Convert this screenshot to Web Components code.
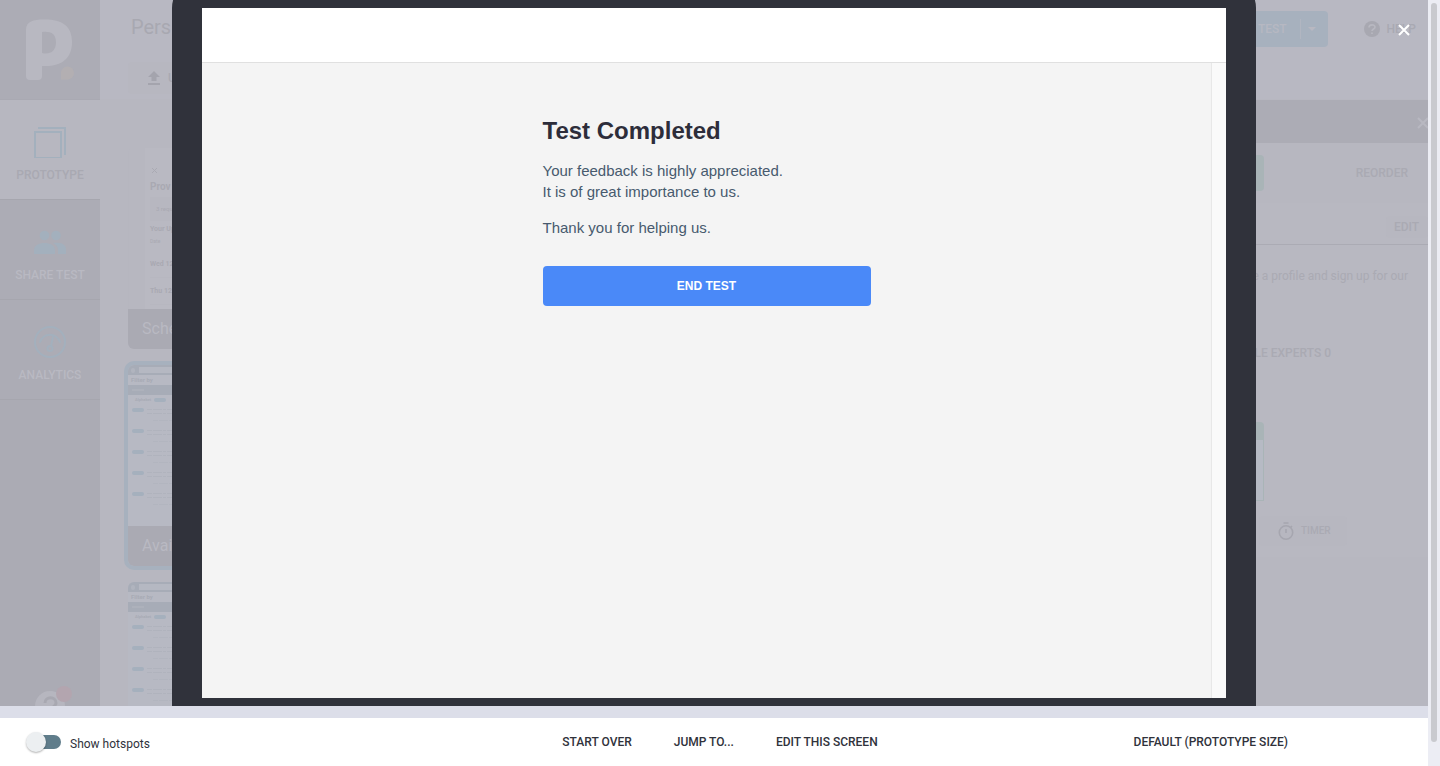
<!DOCTYPE html>
<html lang="en">
<head>
<meta charset="utf-8">
<title>Prototype preview</title>
<style>
  html, body { margin: 0; height: 100%; }
  body { font-family: Roboto, "Liberation Sans", sans-serif; font-size: 12px; color: #a5a5ae; overflow: hidden; }
</style>
</head>
<body>
<preview-app></preview-app>

<script>
const define = (name, html, setup) => {
  const template = document.createElement('template');
  template.innerHTML = html;
  customElements.define(name, class extends HTMLElement {
    constructor() {
      super();
      this.attachShadow({ mode: 'open' }).append(template.content.cloneNode(true));
    }
    connectedCallback() { if (setup) setup(this, this.shadowRoot); }
  });
};

/* Sidebar */
define('nav-tile', `
  <style>
    :host { display: block; height: 100px; box-sizing: border-box; background: #acacb5; border-bottom: 1px solid #a6a6ae; color: #b9b9c2; }
    :host([current]) { background: #b7b7c0; color: #a9a9b2; }
    a { display: flex; flex-direction: column; align-items: center; gap: 9px; padding-top: 26px; color: inherit; text-decoration: none; font-size: 12px; line-height: 16px; font-weight: 500; }
    ::slotted(svg) { display: block; width: 32px; height: 32px; }
  </style>
  <a href="#"><slot name="icon"></slot><slot></slot></a>`);

define('side-nav', `
  <style>
    :host { display: flex; flex-direction: column; width: 100px; flex: none; background: #ababb4; overflow: hidden; }
    .logo { height: 99px; flex: none; background: #acacb5; border-bottom: 1px solid #a9a9b2; }
    .logo svg { display: block; }
    nav-tile { flex: none; }
    .help { margin: auto auto -16px; padding: 0; border: 0; background: none; width: 44px; height: 36px; flex: none; }
  </style>
  <a class="logo" href="#" aria-label="Home">
    <svg width="100" height="99" viewBox="0 0 100 99">
      <path fill="#b8b8c1" fill-rule="evenodd" d="M26 30C26 21 34 19.500 43 19.500C61 19 72 25 72 42C72 59 61 67 42 66V76Q42 80 38 80H30Q26 80 26 76ZM42 32V53C50 55 56 51 56 42.500C56 33 50 31 42 32Z"/>
      <path fill="#b3afb2" d="M61 79V73A6.500 6.500 0 1 1 68 79.500H61Z"/>
    </svg>
  </a>
  <nav-tile current>
    <svg slot="icon" viewBox="0 0 32 32" fill="none" stroke="#a3b0bd" stroke-width="2"><path d="M1 6H27V32H1ZM4 2H31V29"/></svg>PROTOTYPE
  </nav-tile>
  <nav-tile>
    <svg slot="icon" viewBox="0 0 32 32" fill="#a3b0bd"><circle cx="10.500" cy="9.500" r="4.800"/><circle cx="22" cy="9.500" r="4.800"/><path d="M0 28V24C0 14.500 21 14.500 21 24V28ZM19 17C29 15.500 32 20 32 23V28H24V24C24 21 22 18.500 19 17Z"/></svg>SHARE TEST
  </nav-tile>
  <nav-tile>
    <svg slot="icon" viewBox="0 0 32 32" fill="none" stroke="#a3b0bd" stroke-width="2" stroke-linecap="round"><circle cx="16" cy="16" r="15"/><path d="M6 16A10.500 10.500 0 0 1 26 16M19 10.500L17 20"/><circle cx="16" cy="22.500" r="2.500"/></svg>ANALYTICS
  </nav-tile>
  <button class="help" aria-label="Help">
    <svg width="44" height="36" viewBox="0 0 44 36"><circle cx="22" cy="20" r="15" fill="#b6b6bf"/><path d="M17 17C17 10 28 10 28 17C28 21 22 21 22 26" fill="none" stroke="#a8a8b1" stroke-width="3"/><circle cx="36" cy="8" r="8" fill="#b3a5af"/></svg>
  </button>`);

/* Top bar of the workspace */
define('project-header', `
  <style>
    :host { display: flex; justify-content: space-between; height: 100px; box-sizing: border-box; background: #b8b8c2; border-bottom: 1px solid #b7b7c0; }
    h1 { margin: 0; padding: 14px 0 0 31px; font-size: 20px; line-height: 26px; font-weight: 400; color: #a8a8b1; }
    .upload { display: flex; align-items: center; gap: 8px; margin: 22px 0 0 28px; padding: 0 20px; height: 32px; border: 0; background: #b7b7c0; border-radius: 4px; font: 500 12px/16px Roboto, sans-serif; color: #a9a9b2; }
    .right { display: flex; align-items: flex-start; padding: 11px 12px 0 0; }
    .test { display: flex; align-items: center; width: 100px; height: 36px; padding: 0 12px 0 0; box-sizing: border-box; border: 0; border-radius: 4px; background: #a7b1be; color: #b6b8c2; font: 500 12px/16px Roboto, sans-serif; justify-content: flex-end; }
    .test i { width: 1px; height: 20px; background: #b1b6c1; margin: 0 7px 0 13px; }
    .help { display: flex; align-items: center; gap: 7px; height: 36px; margin-left: 36px; color: #a9a9b2; text-decoration: none; font: 500 12px/16px Roboto, sans-serif; }
  </style>
  <div>
    <h1>Pers</h1>
    <button class="upload"><svg width="12" height="14" viewBox="0 0 12 14" fill="#a4a4ad"><path d="M6 0L12 6H8.500V10H3.500V6H0ZM0 12H12V14H0Z"/></svg>U</button>
  </div>
  <div class="right">
    <button class="test">TEST<i></i><svg width="8" height="5" viewBox="0 0 8 5" fill="#b8b8c1"><path d="M0 0H8L4 4Z"/></svg></button>
    <a class="help" href="#"><svg width="16" height="16" viewBox="0 0 16 16"><circle cx="8" cy="8" r="8" fill="#a8a8b1"/><path d="M5 6.500C5 3 11 3 11 6.200C11 8 8 8 8 10M8 11.500V13" fill="none" stroke="#b8b8c1" stroke-width="1.600"/></svg>HELP</a>
  </div>`);

/* Screen thumbnails */
define('schedule-thumb', `
  <style>
    :host { display: block; height: 161px; box-sizing: border-box; padding: 17px 0 0 21px; background: #b9b9c2; color: #a9a9b2; font-weight: 700; border-left: 1px solid #b6b6bf; box-shadow: inset 16px 0 #b7b7c0; }
    svg { display: block; margin: 3px 2px 4px; }
    p { margin: 0; white-space: nowrap; font-size: 7px; line-height: 16px; }
    .title { font-size: 10px; line-height: 20px; }
    .note { font-size: 6px; line-height: 24px; padding-left: 6px; font-weight: 400; background: #b7b7c0; }
    .small { font-size: 5px; line-height: 8px; font-weight: 400; }
    .day { line-height: 26px; border-bottom: 1px solid #b7b7c0; }
    .first { margin-top: 6px; }
  </style>
  <svg width="5" height="5" viewBox="0 0 5 5" stroke="#aaaab3"><path d="M0 0L5 5M5 0L0 5"/></svg>
  <p class="title">Prov</p>
  <p class="note">3 requ</p>
  <p>Your Up</p>
  <p class="small">Date</p>
  <p class="day first">Wed 12.</p>
  <p class="day">Thu 12.</p>`);

define('list-thumb', `
  <style>
    :host { display: block; height: 161px; background: #b7b9c3; overflow: hidden; color: #a8abb5; font-size: 6px; line-height: 10px; font-weight: 700; }
    .top { height: 10px; background: #a7acb7; display: flex; align-items: center; gap: 4px; padding-left: 3px; }
    .top b { width: 4px; height: 5px; background: #b0b4be; border-radius: 2px; }
    .top span { flex: 1; height: 6px; background: #b5b8c2; }
    .filter { padding-left: 3px; }
    .band { display: flex; align-items: center; height: 10px; padding-left: 4px; background: #a7acb7; }
    .band b { width: 12px; height: 2px; background: #adb1bb; }
    .group { display: flex; align-items: center; gap: 3px; padding-left: 7px; font-size: 4px; }
    i { flex: none; width: 12px; height: 4px; border-radius: 2px; background: #a5b0bd; }
    .row { display: flex; gap: 3px; height: 21px; padding: 3px 0 0 4px; box-sizing: border-box; }
    svg { display: block; }
  </style>
  <div class="top"><b></b><span></span></div>
  <div class="filter">Filter by</div>
  <div class="band"><b></b></div>
  <div class="group">Alphabet<i></i></div>
  <div id="rows"></div>`, (host, root) => {
  const row = `<div class="row"><i></i><svg width="60" height="16" viewBox="0 0 60 16" stroke="#b0b3bd" stroke-dasharray="5 1 9 1 3 1"><path d="M0 1.500H60M0 5.500H42"/><path stroke="#b2b5bf" d="M6 12.500H30"/></svg></div>`;
  root.getElementById('rows').innerHTML = row.repeat(5);
});

define('screen-card', `
  <style>
    :host { display: block; width: 180px; border-radius: 6px; overflow: hidden; flex: none; }
    :host([selected]) { outline: 4px solid #a7b1be; }
    p { margin: 0; padding: 0 14px; background: #aaaab3; color: #b9b9c2; font-size: 16px; line-height: 40px; }
  </style>
  <slot name="thumb"></slot><p><slot></slot></p>`);

/* Right-hand settings panel */
define('test-panel', `
  <style>
    :host { display: flex; flex-direction: column; width: 200px; flex: none; overflow: hidden; background: #b8b8c1; }
    button { border: 0; background: none; padding: 0; color: #aaaab3; font: 500 12px/16px Roboto, sans-serif; }
    header { display: flex; justify-content: flex-end; height: 43px; box-sizing: border-box; padding-top: 17px; background: #acacb5; flex: none; }
    header button { margin-right: -1px; height: 12px; }
    svg { display: block; }
    .actions { display: flex; justify-content: space-between; align-items: center; height: 60px; padding-right: 20px; background: #b7b7c0; }
    .go { width: 36px; height: 36px; border-radius: 4px; background: #a9b4b7; }
    .edit { display: flex; justify-content: flex-end; height: 42px; box-sizing: border-box; padding: 13px 0 6px; border-bottom: 1px solid #ababb4; }
    .edit button { width: 42px; background: #b7b7c0; border-radius: 4px; text-align: left; padding-left: 8px; }
    p { margin: 0; padding: 23px 20px 0 0; text-align: right; line-height: 16px; font-size: 12px; color: #aaaab3; white-space: nowrap; }
    h2 { margin: 0; padding: 61px 97px 0 0; text-align: right; font-size: 12px; line-height: 16px; font-weight: 500; color: #aaaab3; white-space: nowrap; }
    .choice { width: 36px; height: 79px; box-sizing: border-box; margin-top: 61px; border: 1px solid #a9b4b7; border-top: 18px solid #a9b4b7; border-radius: 0 4px 0 0; background: #b6bac4; }
    .timer { display: flex; align-items: center; gap: 7px; margin: 15px 0 11px 31px; width: 88px; height: 30px; box-sizing: border-box; padding-left: 19px; background: #b7b7c0; border-radius: 4px; font-size: 10px; }
    .rest { flex: 1; background: #b7b7c0; }
  </style>
  <header><button aria-label="Close panel"><svg width="12" height="12" viewBox="0 0 12 12" stroke="#b8b8c1" stroke-width="2"><path d="M1 1L11 11M11 1L1 11"/></svg></button></header>
  <div class="actions"><button class="go" aria-label="Add"></button><button>REORDER</button></div>
  <div class="edit"><button>EDIT</button></div>
  <p>e a profile and sign up for our</p>
  <h2>LE EXPERTS 0</h2>
  <div class="choice"></div>
  <button class="timer"><svg width="16" height="18" viewBox="0 0 16 18" fill="none" stroke="#a6a6af" stroke-width="1.600"><circle cx="8" cy="10.500" r="6.700"/><path d="M5.500 1H10.500M8 7V11M12.500 5.500L14 4"/></svg>TIMER</button>
  <div class="rest"></div>`);

define('editor-backdrop', `
  <style>
    :host { display: flex; height: 100%; background: #b8b8c1; overflow: hidden; }
    .work { flex: 1; min-width: 0; display: flex; flex-direction: column; }
    .body { flex: 1; min-height: 0; display: flex; justify-content: space-between; background: #b7b7c0; }
    .cards { display: flex; flex-direction: column; gap: 16px; padding: 48px 28px 0; overflow: hidden; }
  </style>
  <side-nav></side-nav>
  <div class="work">
    <project-header></project-header>
    <div class="body">
      <div class="cards">
        <screen-card><schedule-thumb slot="thumb"></schedule-thumb>Sche</screen-card>
        <screen-card selected><list-thumb slot="thumb"></list-thumb>Avai</screen-card>
        <screen-card><list-thumb slot="thumb"></list-thumb></screen-card>
      </div>
      <test-panel></test-panel>
    </div>
  </div>`);

/* Tablet preview */
define('tablet-frame', `
  <style>
    :host { display: flex; flex-direction: column; box-sizing: border-box; background: #30323b; border-radius: 30px 30px 0 0; padding: 30px 30px 8px; }
    .bar { height: 54px; flex: none; background: #fff; border-bottom: 1px solid #e0e0e0; }
    .view { flex: 1; display: flex; min-height: 0; background: #f4f4f4; }
    .content { flex: 1; display: flex; justify-content: center; align-items: flex-start; }
    .track { width: 14px; background: #fafafa; border-left: 1px solid #e8e8e8; }
  </style>
  <div class="bar"></div>
  <div class="view"><div class="content"><slot></slot></div><div class="track"></div></div>`);

define('test-completed', `
  <style>
    :host { display: block; width: 328px; padding-top: 53px; font-family: "Liberation Sans", Helvetica, sans-serif; color: #475a6e; font-size: 15px; line-height: 21px; }
    h1 { margin: 0 0 14px; font-size: 24px; line-height: 30px; color: #2d2d3a; }
    p { margin: 0 0 15px; }
    button { display: block; width: 100%; height: 40px; margin-top: 28px; border: 0; border-radius: 4px; background: #4a89f8; color: #fff; font: bold 12px/16px "Liberation Sans", Helvetica, sans-serif; }
  </style>
  <h1>Test Completed</h1>
  <p>Your feedback is highly appreciated.<br>It is of great importance to us.</p>
  <p>Thank you for helping us.</p>
  <button>END TEST</button>`);

/* Footer toolbar */
define('hotspot-toggle', `
  <style>
    :host { display: block; }
    label { display: flex; align-items: center; gap: 9px; font-size: 12px; line-height: 20px; color: #30323b; }
    input { appearance: none; margin: 0; width: 35px; height: 20px; display: flex; align-items: center; }
    input::before { content: ""; width: 20px; height: 20px; border-radius: 50%; background: #eceff1; box-shadow: 0 1px 2px rgba(0,0,0,.3); z-index: 1; }
    input::after { content: ""; width: 25px; height: 14px; margin-left: -10px; border-radius: 7px; background: #607d8b; }
    span { padding-top: 3px; }
  </style>
  <label><input type="checkbox" role="switch"><span><slot></slot></span></label>`);

define('text-button', `
  <style>
    :host { display: block; }
    button { display: block; border: 0; padding: 0; background: none; color: #30323b; font: 500 12px/20px Roboto, sans-serif; white-space: nowrap; }
  </style>
  <button><slot></slot></button>`);

define('preview-toolbar', `
  <style>
    :host { display: grid; grid-template-columns: 1fr auto 1fr; align-items: center; height: 48px; box-sizing: border-box; padding: 0 14px 0 26px; background: #fff; }
    nav { display: flex; gap: 42px; }
    .size { justify-self: end; margin-right: 126px; }
  </style>
  <hotspot-toggle>Show hotspots</hotspot-toggle>
  <nav><text-button>START OVER</text-button><text-button>JUMP TO...</text-button><text-button>EDIT THIS SCREEN</text-button></nav>
  <text-button class="size">DEFAULT (PROTOTYPE SIZE)</text-button>`);

define('preview-app', `
  <style>
    :host { display: grid; grid-template-columns: 1fr 12px; height: 100vh; background: #ecedf4; }
    .page { display: grid; grid-template-rows: minmax(0, 1fr) 12px 48px; min-width: 0; min-height: 0; }
    .stage { position: relative; overflow: hidden; }
    tablet-frame { position: absolute; top: -22px; bottom: 0; left: 172px; right: 172px; }
    .close { position: absolute; top: 24px; right: 18px; width: 12px; height: 12px; padding: 0; border: 0; background: none; }
    .close svg { display: block; }
    .gap { background: #dcdee9; }
    .scroll { padding: 3px 3px 24px; display: flex; }
    .scroll i { flex: 1; border-radius: 3px; background: #c9cacf; }
  </style>
  <main class="page">
    <div class="stage">
      <editor-backdrop></editor-backdrop>
      <tablet-frame><test-completed></test-completed></tablet-frame>
      <button class="close" aria-label="Close preview"><svg width="12" height="12" viewBox="0 0 12 12" stroke="#fff" stroke-width="2"><path d="M1 1L11 11M11 1L1 11"/></svg></button>
    </div>
    <div class="gap"></div>
    <preview-toolbar></preview-toolbar>
  </main>
  <div class="scroll"><i></i></div>`);
</script>
</body>
</html>
